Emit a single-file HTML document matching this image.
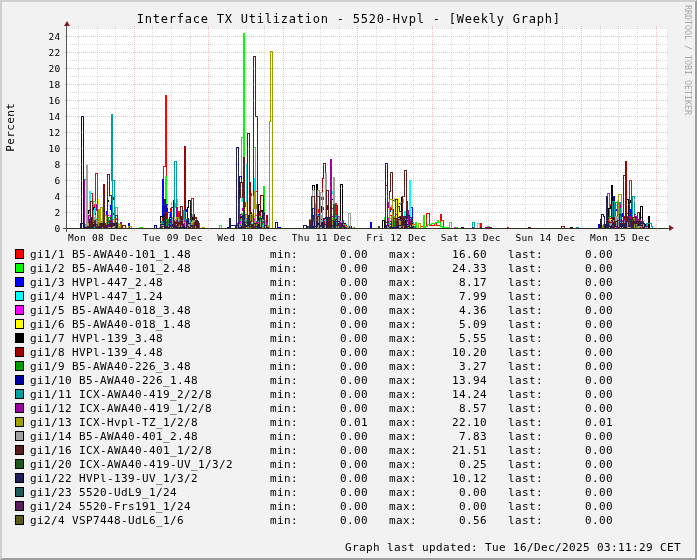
<!DOCTYPE html><html><head><meta charset="utf-8"><title>Interface TX Utilization</title>
<style>html,body{margin:0;padding:0;background:#f2f2f2}svg{display:block;will-change:transform}text{font-family:"DejaVu Sans Mono","Liberation Mono",monospace;fill:#000;white-space:pre}.l{font-size:11px;letter-spacing:0.378px}.ax{font-size:9.5px;letter-spacing:0.28px}.t{font-size:12px;letter-spacing:0.776px}</style></head><body>
<svg width="697" height="560" viewBox="0 0 697 560">
<rect width="697" height="560" fill="#f2f2f2"/>
<path d="M0 0H697V2H2V560H0Z" fill="#cfcfcf"/>
<path d="M697 560H0L2 558H695V2L697 0Z" fill="#9e9e9e"/>
<rect x="67" y="28" width="600" height="200" fill="#fff"/>
<g fill="none" stroke-width="1" stroke-linejoin="miter" stroke-linecap="square" shape-rendering="crispEdges">
<path stroke="#ff0000" d="M91.5 193.5H92.5M92.5 193.5V201.5M95.5 228.5V173.5H97.5V228.5M163.5 228.5V166.5H165.5V95.5H166.5V228.5M170.5 228.5V208.5H171.5V228.5M178.5 228.5V211.5H179.5V228.5M191.5 228.5V198.5H193.5V228.5M335.5 228.5V203.5H336.5V228.5M420.5 228.5V226.5H426.5V213.5H429.5V225.5H434.5V223.5H436.5V225.5H440.5V214.5H441.5V220.5H443.5V227.5H445.5V228.5M480.5 228.5V223.5H481.5V228.5M507.5 228.5V227.5H508.5V228.5M629.5 228.5V180.5H631.5V228.5M640.5 228.5V217.5H642.5V228.5M87.5 228.5V222.5H89.5V227.5H91.5V227.5H92.5V218.5H95.5V221.5H97.5V222.5H98.5V227.5H99.5V224.5H101.5V221.5H102.5V223.5H103.5V225.5H105.5V226.5H106.5V220.5H107.5V227.5H108.5V219.5H109.5V225.5H111.5V227.5H114.5V227.5H115.5V228.5M161.5 228.5V223.5H163.5V227.5H165.5V226.5H167.5V225.5H169.5V226.5H171.5V224.5H173.5V221.5H176.5V221.5H179.5V227.5H181.5V222.5H183.5V224.5H186.5V221.5H188.5V221.5H191.5V226.5H192.5V226.5H194.5V218.5H196.5V228.5M239.5 228.5V219.5H242.5V226.5H244.5V225.5H246.5V221.5H249.5V220.5H251.5V217.5H254.5V227.5H257.5V225.5H259.5V219.5H260.5V211.5H263.5V226.5H264.5V224.5H266.5V228.5M309.5 228.5V224.5H311.5V220.5H313.5V223.5H315.5V227.5H316.5V227.5H318.5V216.5H319.5V220.5H322.5V225.5H325.5V223.5H326.5V227.5H328.5V222.5H330.5V228.5H332.5V224.5H333.5V227.5H335.5V220.5H337.5V226.5H339.5V226.5H340.5V226.5H342.5V228.5H344.5V225.5H345.5V227.5H347.5V228.5M384.5 228.5V227.5H386.5V226.5H388.5V226.5H389.5V215.5H391.5V222.5H394.5V223.5H397.5V222.5H398.5V227.5H400.5V222.5H401.5V221.5H403.5V226.5H405.5V219.5H408.5V224.5H409.5V220.5H410.5V227.5H412.5V224.5H415.5V228.5M605.5 228.5V226.5H608.5V224.5H609.5V228.5H611.5V226.5H613.5V226.5H614.5V224.5H616.5V226.5H617.5V221.5H619.5V222.5H622.5V226.5H623.5V227.5H626.5V225.5H628.5V225.5H630.5V227.5H631.5V226.5H632.5V223.5H635.5V226.5H637.5V227.5H639.5V221.5H640.5V223.5H643.5V228.5M111.5 218.5V220.5M111.5 218.5H112.5M93.5 204.5V205.5M93.5 204.5H94.5M94.5 204.5V206.5M97.5 221.5V224.5M97.5 221.5H98.5M111.5 215.5V218.5M111.5 215.5H112.5M99.5 213.5V214.5M164.5 218.5V222.5M164.5 218.5H165.5M166.5 218.5V220.5M166.5 218.5H167.5M172.5 218.5V222.5M251.5 193.5V195.5M245.5 202.5V206.5M249.5 202.5V208.5M249.5 202.5H250.5M246.5 217.5V220.5M255.5 191.5V193.5M255.5 191.5H256.5M318.5 209.5V212.5M323.5 197.5V199.5M321.5 197.5V199.5M326.5 208.5V210.5M326.5 208.5H327.5M407.5 211.5V217.5M390.5 207.5V209.5M403.5 220.5V221.5M403.5 220.5H404.5M612.5 214.5V218.5M618.5 219.5V220.5M610.5 204.5V207.5M631.5 218.5V220.5M609.5 218.5V220.5M609.5 218.5H610.5M629.5 200.5V202.5M629.5 200.5H630.5"/>
<path stroke="#00ff00" d="M93.5 228.5V201.5H95.5V228.5M115.5 228.5V207.5H117.5V228.5M139.5 228.5V227.5H142.5V228.5M165.5 228.5V176.5H166.5V228.5M219.5 228.5V225.5H221.5V228.5M241.5 137.5V176.5M241.5 137.5H243.5M243.5 228.5V33.5H244.5V228.5M253.5 228.5V147.5H255.5V228.5M263.5 228.5V186.5H264.5V228.5M268.5 228.5V225.5H269.5V228.5M384.5 228.5V217.5H385.5V228.5M415.5 228.5V222.5H416.5V228.5M423.5 228.5V215.5H424.5V228.5M425.5 228.5V226.5H427.5V224.5H431.5V223.5H435.5V222.5H437.5V220.5H438.5V222.5H440.5V226.5H442.5V227.5H445.5V228.5M449.5 228.5V222.5H451.5V228.5M446.5 228.5V227.5H448.5V228.5M456.5 228.5V227.5H457.5V228.5M487.5 228.5V226.5H489.5V228.5M84.5 228.5V226.5H86.5V226.5H88.5V224.5H90.5V226.5H92.5V227.5H93.5V227.5H96.5V226.5H98.5V225.5H100.5V225.5H102.5V226.5H104.5V226.5H106.5V226.5H108.5V224.5H109.5V227.5H111.5V226.5H113.5V219.5H115.5V223.5H118.5V225.5H120.5V228.5M162.5 228.5V225.5H163.5V226.5H164.5V222.5H166.5V227.5H168.5V227.5H171.5V224.5H173.5V228.5H175.5V227.5H178.5V225.5H179.5V226.5H181.5V227.5H183.5V224.5H184.5V224.5H186.5V223.5H189.5V225.5H190.5V226.5H192.5V225.5H193.5V226.5H195.5V228.5M237.5 228.5V225.5H239.5V226.5H241.5V214.5H243.5V226.5H245.5V214.5H247.5V226.5H249.5V213.5H250.5V228.5H252.5V223.5H254.5V224.5H256.5V225.5H258.5V219.5H260.5V227.5H262.5V220.5H264.5V228.5M307.5 228.5V226.5H309.5V226.5H312.5V222.5H313.5V224.5H314.5V227.5H315.5V217.5H317.5V220.5H320.5V215.5H321.5V227.5H323.5V226.5H324.5V220.5H327.5V224.5H328.5V219.5H330.5V218.5H332.5V227.5H333.5V226.5H334.5V223.5H337.5V227.5H338.5V227.5H340.5V225.5H342.5V226.5H344.5V228.5M387.5 228.5V227.5H389.5V227.5H391.5V220.5H393.5V226.5H396.5V222.5H398.5V220.5H400.5V227.5H402.5V222.5H404.5V224.5H405.5V217.5H407.5V222.5H408.5V225.5H410.5V228.5M605.5 228.5V226.5H607.5V218.5H609.5V226.5H611.5V226.5H613.5V228.5H615.5V218.5H617.5V221.5H619.5V226.5H620.5V227.5H623.5V226.5H625.5V226.5H626.5V224.5H627.5V225.5H630.5V226.5H633.5V221.5H635.5V225.5H637.5V225.5H640.5V226.5H643.5V223.5H644.5V224.5H647.5V228.5M169.5 214.5V218.5M169.5 214.5H170.5M177.5 199.5V205.5M175.5 203.5V207.5M245.5 215.5V217.5M241.5 213.5V215.5M241.5 213.5H242.5M257.5 210.5V211.5M321.5 207.5V211.5M311.5 212.5V214.5M311.5 212.5H312.5M405.5 217.5V220.5M397.5 200.5V206.5M388.5 217.5V220.5M609.5 220.5V221.5"/>
<path stroke="#0000ff" d="M106.5 211.5V216.5M110.5 205.5V209.5M113.5 213.5V214.5M128.5 228.5V223.5H129.5V228.5M162.5 228.5V179.5H163.5V228.5M166.5 228.5V204.5H167.5V228.5M167.5 228.5V212.5H170.5V228.5M173.5 228.5V200.5H174.5V228.5M227.5 228.5V227.5H228.5V228.5M239.5 181.5V176.5H241.5V181.5M239.5 176.5V200.5M238.5 181.5V200.5M275.5 228.5V222.5H277.5V228.5M278.5 228.5V227.5H280.5V228.5M349.5 228.5V226.5H351.5V228.5M370.5 228.5V222.5H371.5V228.5M385.5 228.5V163.5H387.5V228.5M393.5 200.5H395.5M399.5 203.5H401.5M411.5 207.5H412.5M412.5 207.5V223.5M598.5 228.5V224.5H599.5V228.5M613.5 228.5V196.5H614.5V228.5M611.5 228.5V206.5H612.5V228.5M630.5 228.5V209.5H631.5V228.5M85.5 228.5V227.5H87.5V227.5H89.5V221.5H91.5V217.5H93.5V219.5H95.5V222.5H96.5V222.5H97.5V226.5H98.5V219.5H100.5V219.5H103.5V227.5H104.5V223.5H105.5V226.5H107.5V221.5H110.5V222.5H111.5V227.5H112.5V226.5H115.5V223.5H116.5V227.5H118.5V228.5M160.5 228.5V226.5H163.5V223.5H164.5V226.5H166.5V224.5H168.5V227.5H169.5V226.5H170.5V218.5H171.5V224.5H173.5V227.5H174.5V221.5H176.5V222.5H179.5V227.5H181.5V222.5H184.5V219.5H186.5V226.5H187.5V221.5H189.5V220.5H192.5V222.5H193.5V222.5H195.5V227.5H197.5V228.5M238.5 228.5V223.5H240.5V226.5H241.5V228.5H242.5V227.5H244.5V226.5H245.5V227.5H247.5V216.5H248.5V222.5H250.5V212.5H251.5V223.5H254.5V226.5H255.5V227.5H257.5V227.5H259.5V211.5H262.5V227.5H264.5V227.5H265.5V227.5H267.5V228.5M309.5 228.5V225.5H311.5V225.5H314.5V224.5H317.5V226.5H320.5V219.5H322.5V226.5H323.5V218.5H325.5V218.5H326.5V220.5H328.5V220.5H330.5V226.5H333.5V228.5H335.5V226.5H336.5V220.5H337.5V221.5H340.5V219.5H342.5V226.5H345.5V228.5M385.5 228.5V226.5H386.5V225.5H387.5V225.5H389.5V223.5H392.5V227.5H395.5V226.5H397.5V227.5H398.5V225.5H401.5V227.5H404.5V227.5H406.5V220.5H408.5V226.5H410.5V223.5H413.5V228.5M606.5 228.5V224.5H607.5V224.5H610.5V227.5H613.5V222.5H616.5V226.5H618.5V221.5H621.5V226.5H624.5V221.5H626.5V227.5H628.5V221.5H630.5V216.5H631.5V228.5H633.5V222.5H635.5V227.5H637.5V226.5H639.5V222.5H640.5V224.5H642.5V228.5M95.5 213.5V214.5M96.5 220.5V222.5M103.5 211.5V213.5M103.5 211.5H104.5M173.5 215.5V221.5M186.5 220.5V224.5M186.5 209.5V211.5M171.5 215.5V218.5M171.5 210.5V214.5M249.5 200.5V206.5M247.5 198.5V200.5M243.5 213.5V215.5M318.5 214.5V216.5M336.5 221.5V224.5M336.5 221.5H337.5M334.5 196.5V198.5M327.5 205.5V209.5M322.5 212.5V218.5M312.5 222.5V226.5M393.5 209.5V213.5M390.5 210.5V211.5M639.5 217.5V221.5M622.5 213.5V216.5M629.5 222.5V225.5M629.5 222.5H630.5M617.5 220.5V223.5M616.5 209.5V210.5M616.5 209.5H617.5M625.5 206.5V207.5"/>
<path stroke="#00ffff" d="M89.5 228.5V191.5H90.5V228.5M94.5 207.5V214.5M241.5 201.5V197.5H242.5V201.5M246.5 228.5V164.5H247.5V228.5M254.5 178.5V191.5M332.5 191.5V193.5M404.5 228.5V211.5H405.5V228.5M409.5 228.5V180.5H410.5V228.5M477.5 228.5V223.5H479.5V228.5M617.5 228.5V200.5H618.5V228.5M86.5 228.5V226.5H88.5V227.5H90.5V223.5H92.5V227.5H94.5V218.5H96.5V226.5H98.5V224.5H100.5V219.5H102.5V228.5H103.5V225.5H104.5V225.5H106.5V227.5H107.5V227.5H109.5V223.5H112.5V226.5H115.5V227.5H117.5V228.5M161.5 228.5V224.5H164.5V227.5H167.5V227.5H169.5V218.5H171.5V217.5H173.5V220.5H174.5V226.5H176.5V226.5H179.5V227.5H181.5V227.5H183.5V227.5H185.5V226.5H187.5V227.5H188.5V220.5H190.5V222.5H193.5V227.5H195.5V228.5M236.5 228.5V226.5H237.5V227.5H239.5V219.5H241.5V227.5H243.5V226.5H245.5V222.5H248.5V227.5H250.5V223.5H252.5V226.5H254.5V220.5H255.5V227.5H257.5V220.5H258.5V223.5H260.5V226.5H262.5V221.5H265.5V228.5M310.5 228.5V227.5H312.5V221.5H314.5V227.5H316.5V215.5H318.5V226.5H321.5V222.5H324.5V218.5H325.5V227.5H326.5V218.5H329.5V227.5H331.5V225.5H333.5V227.5H335.5V227.5H336.5V226.5H338.5V226.5H340.5V224.5H341.5V225.5H343.5V224.5H346.5V228.5M386.5 228.5V225.5H389.5V224.5H392.5V216.5H393.5V226.5H395.5V216.5H396.5V227.5H397.5V223.5H399.5V217.5H401.5V223.5H404.5V224.5H407.5V223.5H408.5V227.5H410.5V228.5M605.5 228.5V227.5H608.5V226.5H610.5V221.5H611.5V222.5H613.5V226.5H614.5V217.5H616.5V222.5H618.5V224.5H620.5V227.5H621.5V227.5H623.5V224.5H624.5V219.5H626.5V223.5H628.5V226.5H629.5V222.5H631.5V223.5H632.5V227.5H633.5V226.5H634.5V225.5H635.5V226.5H638.5V220.5H640.5V224.5H641.5V227.5H644.5V225.5H646.5V228.5M108.5 220.5V222.5M108.5 220.5H109.5M102.5 214.5V216.5M623.5 220.5V222.5M623.5 220.5H624.5M614.5 220.5V226.5M615.5 205.5V208.5M615.5 205.5H616.5M625.5 214.5V218.5"/>
<path stroke="#ff00ff" d="M454.5 228.5V227.5H455.5V228.5M607.5 228.5V193.5H609.5V228.5M85.5 228.5V225.5H88.5V223.5H91.5V226.5H92.5V220.5H94.5V223.5H95.5V226.5H96.5V221.5H98.5V226.5H99.5V227.5H102.5V227.5H104.5V227.5H105.5V227.5H107.5V215.5H110.5V221.5H111.5V223.5H113.5V219.5H115.5V219.5H117.5V228.5M160.5 228.5V226.5H163.5V223.5H165.5V226.5H166.5V227.5H168.5V221.5H171.5V223.5H172.5V225.5H174.5V227.5H175.5V227.5H178.5V220.5H180.5V224.5H183.5V224.5H185.5V227.5H188.5V221.5H190.5V227.5H193.5V227.5H195.5V228.5M237.5 228.5V223.5H239.5V224.5H240.5V221.5H243.5V226.5H246.5V226.5H249.5V217.5H251.5V226.5H252.5V227.5H254.5V215.5H257.5V215.5H259.5V227.5H261.5V226.5H262.5V227.5H265.5V228.5M309.5 228.5V226.5H310.5V226.5H312.5V226.5H313.5V224.5H315.5V226.5H317.5V222.5H319.5V227.5H321.5V227.5H323.5V227.5H326.5V224.5H328.5V226.5H331.5V221.5H334.5V226.5H337.5V216.5H339.5V223.5H341.5V220.5H343.5V226.5H344.5V228.5M386.5 228.5V227.5H388.5V218.5H391.5V223.5H392.5V214.5H393.5V226.5H395.5V218.5H397.5V226.5H399.5V221.5H402.5V224.5H403.5V227.5H405.5V226.5H408.5V219.5H410.5V228.5M606.5 228.5V226.5H608.5V227.5H610.5V228.5H611.5V226.5H612.5V226.5H614.5V225.5H615.5V227.5H617.5V225.5H618.5V228.5H620.5V227.5H622.5V225.5H624.5V226.5H626.5V227.5H628.5V227.5H630.5V222.5H632.5V225.5H634.5V216.5H636.5V228.5H637.5V227.5H639.5V227.5H641.5V226.5H644.5V225.5H645.5V228.5"/>
<path stroke="#ffff00" d="M109.5 192.5V222.5M109.5 192.5H110.5M246.5 228.5V202.5H247.5V228.5M396.5 228.5V198.5H398.5V228.5M86.5 228.5V224.5H88.5V227.5H91.5V226.5H94.5V221.5H95.5V226.5H98.5V221.5H100.5V226.5H103.5V226.5H104.5V226.5H105.5V227.5H106.5V225.5H109.5V226.5H110.5V220.5H113.5V226.5H115.5V222.5H117.5V224.5H119.5V228.5M162.5 228.5V227.5H164.5V227.5H166.5V225.5H169.5V217.5H171.5V226.5H173.5V216.5H175.5V224.5H176.5V227.5H178.5V226.5H180.5V227.5H183.5V223.5H184.5V217.5H187.5V221.5H188.5V225.5H191.5V227.5H193.5V225.5H194.5V227.5H196.5V228.5M238.5 228.5V227.5H239.5V214.5H241.5V227.5H242.5V226.5H245.5V215.5H246.5V226.5H247.5V220.5H249.5V227.5H251.5V227.5H254.5V227.5H256.5V227.5H257.5V226.5H259.5V223.5H261.5V215.5H264.5V223.5H267.5V226.5H269.5V228.5M308.5 228.5V227.5H311.5V226.5H313.5V215.5H316.5V224.5H318.5V220.5H320.5V227.5H321.5V224.5H324.5V223.5H327.5V226.5H328.5V226.5H329.5V226.5H330.5V226.5H332.5V219.5H333.5V221.5H335.5V225.5H338.5V217.5H341.5V227.5H342.5V228.5M384.5 228.5V227.5H386.5V225.5H388.5V225.5H391.5V226.5H394.5V225.5H396.5V227.5H399.5V223.5H402.5V225.5H405.5V227.5H406.5V217.5H408.5V218.5H409.5V224.5H412.5V228.5M606.5 228.5V226.5H608.5V219.5H611.5V225.5H613.5V217.5H616.5V224.5H619.5V223.5H622.5V224.5H623.5V224.5H625.5V222.5H627.5V222.5H630.5V224.5H632.5V226.5H634.5V228.5H636.5V222.5H639.5V222.5H642.5V228.5M98.5 199.5V203.5M99.5 203.5V206.5M187.5 211.5V215.5M184.5 214.5V216.5M177.5 207.5V209.5M177.5 207.5H178.5M254.5 213.5V217.5M314.5 215.5V219.5M314.5 215.5H315.5M334.5 196.5V199.5M334.5 196.5H335.5M315.5 209.5V210.5M615.5 203.5V205.5"/>
<path stroke="#000000" d="M88.5 210.5H89.5M88.5 210.5V213.5M112.5 197.5H113.5M112.5 198.5H113.5M112.5 199.5H113.5M160.5 228.5V216.5H162.5V228.5M187.5 228.5V207.5H188.5V200.5H190.5V214.5H194.5V228.5M258.5 228.5V204.5H260.5V210.5H262.5V218.5H264.5V228.5M312.5 228.5V185.5H314.5V228.5M316.5 228.5V184.5H317.5V228.5M338.5 228.5V219.5H340.5V184.5H342.5V228.5M382.5 228.5V220.5H384.5V228.5M401.5 228.5V197.5H402.5V228.5M408.5 228.5V217.5H409.5V228.5M461.5 228.5V227.5H463.5V228.5M570.5 228.5V227.5H572.5V228.5M600.5 228.5V219.5H601.5V228.5M608.5 228.5V208.5H610.5V206.5H611.5V185.5H612.5V228.5M626.5 228.5V199.5H628.5V228.5M640.5 228.5V206.5H642.5V228.5M644.5 228.5V224.5H645.5V228.5M648.5 228.5V216.5H649.5V228.5M85.5 228.5V226.5H87.5V226.5H88.5V227.5H89.5V227.5H92.5V222.5H93.5V226.5H95.5V221.5H97.5V223.5H98.5V227.5H101.5V227.5H103.5V227.5H105.5V227.5H108.5V227.5H111.5V223.5H113.5V226.5H115.5V227.5H117.5V228.5M161.5 228.5V221.5H164.5V220.5H166.5V221.5H169.5V227.5H172.5V222.5H173.5V222.5H176.5V221.5H178.5V227.5H180.5V228.5H183.5V226.5H184.5V221.5H186.5V227.5H187.5V226.5H190.5V216.5H192.5V226.5H194.5V224.5H197.5V228.5M239.5 228.5V216.5H241.5V226.5H243.5V222.5H244.5V226.5H247.5V216.5H248.5V222.5H251.5V227.5H254.5V227.5H255.5V227.5H256.5V228.5H259.5V223.5H260.5V218.5H263.5V226.5H265.5V228.5M308.5 228.5V227.5H310.5V224.5H312.5V227.5H315.5V226.5H316.5V225.5H318.5V223.5H321.5V228.5H324.5V227.5H326.5V222.5H328.5V224.5H331.5V226.5H334.5V226.5H336.5V221.5H337.5V226.5H339.5V226.5H341.5V223.5H343.5V223.5H345.5V228.5M384.5 228.5V226.5H386.5V227.5H388.5V226.5H390.5V226.5H393.5V220.5H396.5V218.5H398.5V217.5H400.5V227.5H402.5V221.5H404.5V226.5H405.5V224.5H408.5V226.5H409.5V219.5H412.5V228.5M606.5 228.5V226.5H609.5V227.5H611.5V220.5H613.5V217.5H614.5V226.5H616.5V226.5H618.5V226.5H620.5V226.5H622.5V223.5H625.5V226.5H627.5V218.5H628.5V224.5H629.5V228.5H631.5V224.5H632.5V227.5H635.5V225.5H637.5V220.5H638.5V226.5H641.5V221.5H643.5V228.5M108.5 200.5V201.5M93.5 207.5V209.5M93.5 207.5H94.5M190.5 215.5V218.5M165.5 208.5V210.5M185.5 215.5V217.5M251.5 213.5V215.5M254.5 191.5V193.5M240.5 216.5V218.5M331.5 199.5V203.5M331.5 199.5H332.5M321.5 206.5V212.5M405.5 218.5V222.5M402.5 218.5V222.5M402.5 218.5H403.5M630.5 200.5V202.5M613.5 203.5V204.5"/>
<path stroke="#a00000" d="M103.5 228.5V184.5H104.5V228.5M122.5 228.5V225.5H125.5V228.5M166.5 228.5V212.5H167.5V228.5M184.5 228.5V146.5H185.5V228.5M250.5 182.5V228.5M260.5 228.5V195.5H263.5V228.5M266.5 228.5V215.5H267.5V228.5M322.5 228.5V178.5H323.5V163.5H325.5V228.5M385.5 228.5V185.5H387.5V228.5M407.5 201.5V218.5M561.5 228.5V226.5H564.5V228.5M625.5 228.5V161.5H626.5V228.5M637.5 228.5V212.5H639.5V228.5M87.5 228.5V226.5H89.5V219.5H92.5V225.5H94.5V224.5H96.5V222.5H98.5V221.5H100.5V227.5H103.5V226.5H104.5V226.5H106.5V226.5H108.5V222.5H110.5V217.5H111.5V227.5H113.5V227.5H114.5V224.5H116.5V226.5H119.5V228.5M160.5 228.5V223.5H162.5V218.5H164.5V227.5H167.5V226.5H170.5V227.5H173.5V226.5H175.5V225.5H177.5V219.5H180.5V226.5H182.5V226.5H184.5V227.5H185.5V219.5H187.5V227.5H189.5V222.5H191.5V226.5H192.5V226.5H193.5V217.5H196.5V227.5H199.5V228.5M237.5 228.5V225.5H239.5V218.5H241.5V224.5H243.5V226.5H245.5V218.5H248.5V222.5H250.5V226.5H253.5V227.5H255.5V222.5H256.5V223.5H257.5V214.5H260.5V226.5H261.5V227.5H263.5V226.5H264.5V224.5H266.5V228.5H267.5V228.5M308.5 228.5V227.5H310.5V221.5H312.5V227.5H314.5V226.5H315.5V219.5H317.5V227.5H320.5V224.5H321.5V227.5H324.5V221.5H327.5V227.5H329.5V227.5H331.5V220.5H333.5V226.5H334.5V221.5H336.5V226.5H337.5V227.5H339.5V225.5H342.5V227.5H344.5V225.5H346.5V228.5M387.5 228.5V226.5H389.5V221.5H391.5V226.5H394.5V222.5H395.5V226.5H397.5V227.5H399.5V216.5H401.5V220.5H403.5V216.5H406.5V225.5H408.5V222.5H410.5V227.5H413.5V228.5M606.5 228.5V219.5H608.5V222.5H610.5V222.5H612.5V226.5H615.5V219.5H617.5V224.5H618.5V227.5H621.5V221.5H622.5V222.5H624.5V216.5H626.5V227.5H629.5V219.5H632.5V227.5H633.5V218.5H636.5V227.5H639.5V227.5H640.5V226.5H642.5V227.5H644.5V226.5H646.5V228.5"/>
<path stroke="#00a000" d="M615.5 228.5V202.5H617.5V228.5M84.5 228.5V227.5H85.5V224.5H87.5V223.5H90.5V223.5H92.5V224.5H94.5V223.5H96.5V222.5H99.5V227.5H102.5V226.5H104.5V226.5H107.5V224.5H108.5V217.5H111.5V226.5H113.5V226.5H116.5V228.5M161.5 228.5V223.5H164.5V226.5H166.5V219.5H168.5V224.5H169.5V226.5H171.5V225.5H174.5V226.5H175.5V228.5H177.5V227.5H179.5V225.5H182.5V227.5H185.5V225.5H187.5V226.5H189.5V222.5H190.5V228.5H192.5V222.5H193.5V224.5H194.5V227.5H196.5V223.5H199.5V228.5M238.5 228.5V221.5H240.5V219.5H242.5V226.5H243.5V226.5H244.5V220.5H246.5V223.5H249.5V228.5H251.5V226.5H254.5V226.5H257.5V226.5H260.5V217.5H262.5V224.5H263.5V226.5H264.5V225.5H266.5V228.5M310.5 228.5V224.5H312.5V224.5H315.5V226.5H316.5V227.5H317.5V226.5H318.5V227.5H320.5V227.5H323.5V227.5H325.5V217.5H327.5V222.5H328.5V218.5H329.5V227.5H331.5V223.5H334.5V226.5H337.5V227.5H340.5V221.5H341.5V222.5H342.5V227.5H344.5V228.5M385.5 228.5V226.5H387.5V227.5H390.5V226.5H393.5V227.5H394.5V221.5H397.5V226.5H399.5V226.5H401.5V222.5H404.5V225.5H406.5V227.5H408.5V227.5H410.5V226.5H412.5V226.5H415.5V228.5M603.5 228.5V224.5H604.5V224.5H605.5V227.5H607.5V217.5H609.5V216.5H612.5V222.5H613.5V226.5H615.5V226.5H616.5V226.5H619.5V221.5H620.5V221.5H621.5V222.5H622.5V222.5H624.5V222.5H626.5V222.5H629.5V224.5H630.5V226.5H633.5V223.5H635.5V226.5H636.5V227.5H637.5V226.5H640.5V222.5H642.5V228.5"/>
<path stroke="#0000a0" d="M81.5 228.5V116.5H83.5V228.5M154.5 228.5V225.5H156.5V228.5"/>
<path stroke="#00a0a0" d="M84.5 179.5H86.5M111.5 180.5V114.5H112.5V180.5M112.5 180.5V228.5M112.5 180.5H114.5M114.5 180.5V228.5M174.5 228.5V161.5H176.5V228.5M183.5 228.5V210.5H184.5V228.5M472.5 228.5V222.5H474.5V228.5M576.5 228.5V227.5H578.5V228.5M612.5 228.5V201.5H614.5V228.5M619.5 228.5V202.5H620.5V228.5M632.5 228.5V196.5H634.5V228.5M642.5 228.5V223.5H643.5V228.5M646.5 228.5V223.5H651.5V226.5H652.5V228.5M84.5 228.5V227.5H86.5V224.5H88.5V222.5H90.5V222.5H91.5V224.5H93.5V226.5H95.5V222.5H97.5V223.5H98.5V227.5H99.5V226.5H100.5V221.5H102.5V224.5H104.5V227.5H106.5V227.5H108.5V221.5H110.5V219.5H112.5V226.5H114.5V226.5H116.5V227.5H119.5V228.5M161.5 228.5V221.5H162.5V223.5H165.5V226.5H166.5V227.5H168.5V223.5H170.5V224.5H171.5V225.5H173.5V227.5H174.5V221.5H176.5V227.5H178.5V225.5H179.5V224.5H181.5V227.5H182.5V225.5H185.5V219.5H187.5V227.5H189.5V220.5H190.5V226.5H193.5V226.5H195.5V228.5M238.5 228.5V224.5H239.5V226.5H240.5V227.5H243.5V215.5H245.5V218.5H248.5V226.5H250.5V226.5H253.5V227.5H256.5V221.5H258.5V221.5H260.5V220.5H261.5V226.5H264.5V222.5H265.5V223.5H267.5V227.5H269.5V228.5M308.5 228.5V226.5H311.5V226.5H312.5V227.5H315.5V226.5H316.5V215.5H318.5V224.5H321.5V222.5H323.5V225.5H324.5V227.5H325.5V226.5H327.5V220.5H329.5V223.5H331.5V226.5H333.5V226.5H334.5V215.5H336.5V226.5H337.5V227.5H340.5V226.5H343.5V227.5H346.5V228.5M385.5 228.5V222.5H388.5V223.5H390.5V224.5H393.5V227.5H396.5V227.5H398.5V226.5H401.5V221.5H403.5V224.5H404.5V218.5H405.5V219.5H406.5V221.5H408.5V227.5H409.5V220.5H411.5V222.5H413.5V227.5H415.5V228.5M603.5 228.5V227.5H605.5V228.5H608.5V226.5H609.5V224.5H611.5V223.5H612.5V223.5H615.5V223.5H616.5V226.5H618.5V226.5H621.5V222.5H624.5V219.5H626.5V225.5H628.5V227.5H631.5V227.5H633.5V224.5H635.5V225.5H638.5V225.5H640.5V226.5H643.5V228.5"/>
<path stroke="#a000a0" d="M84.5 180.5V228.5M120.5 228.5V222.5H121.5V228.5M176.5 228.5V207.5H177.5V228.5M238.5 228.5V199.5H239.5V228.5M330.5 228.5V159.5H331.5V228.5M340.5 228.5V222.5H341.5V228.5M346.5 228.5V226.5H348.5V228.5M388.5 202.5V207.5M388.5 202.5H389.5M408.5 210.5V224.5M472.5 228.5V227.5H473.5V228.5M485.5 228.5V227.5H491.5V228.5M646.5 228.5V226.5H647.5V228.5M87.5 228.5V227.5H88.5V222.5H90.5V227.5H92.5V223.5H94.5V220.5H96.5V221.5H98.5V226.5H100.5V226.5H101.5V224.5H103.5V224.5H105.5V224.5H108.5V226.5H109.5V220.5H112.5V226.5H113.5V227.5H114.5V226.5H116.5V226.5H119.5V228.5M162.5 228.5V224.5H165.5V222.5H167.5V224.5H168.5V224.5H169.5V221.5H172.5V227.5H174.5V227.5H177.5V226.5H180.5V227.5H182.5V220.5H184.5V226.5H186.5V226.5H189.5V228.5H192.5V227.5H194.5V226.5H197.5V228.5M236.5 228.5V226.5H239.5V221.5H242.5V227.5H244.5V214.5H247.5V221.5H248.5V216.5H251.5V227.5H254.5V226.5H256.5V222.5H259.5V226.5H261.5V222.5H263.5V222.5H266.5V228.5M309.5 228.5V227.5H312.5V225.5H313.5V226.5H315.5V225.5H317.5V227.5H319.5V222.5H321.5V222.5H322.5V219.5H325.5V227.5H327.5V222.5H328.5V224.5H331.5V216.5H333.5V219.5H334.5V221.5H337.5V227.5H338.5V218.5H339.5V222.5H341.5V221.5H343.5V228.5H345.5V226.5H347.5V228.5M386.5 228.5V226.5H389.5V226.5H392.5V217.5H395.5V214.5H397.5V221.5H399.5V220.5H400.5V226.5H403.5V223.5H405.5V227.5H407.5V228.5H409.5V219.5H410.5V221.5H411.5V225.5H413.5V228.5M606.5 228.5V226.5H608.5V225.5H611.5V222.5H613.5V226.5H615.5V225.5H616.5V220.5H617.5V227.5H619.5V220.5H622.5V226.5H624.5V219.5H627.5V216.5H630.5V223.5H632.5V227.5H634.5V216.5H636.5V222.5H638.5V219.5H640.5V221.5H643.5V228.5M96.5 204.5V210.5M102.5 219.5V220.5M88.5 215.5V221.5M88.5 215.5H89.5M240.5 214.5V216.5M240.5 214.5H241.5M242.5 208.5V210.5M320.5 197.5V199.5M331.5 208.5V211.5M331.5 208.5H332.5M323.5 207.5V209.5M313.5 215.5V221.5M313.5 215.5H314.5M397.5 205.5V208.5M391.5 205.5V209.5M391.5 205.5H392.5M620.5 204.5V207.5M620.5 204.5H621.5M634.5 214.5V217.5M634.5 214.5H635.5"/>
<path stroke="#a0a000" d="M98.5 228.5V209.5H99.5V228.5M100.5 228.5V207.5H102.5V228.5M103.5 228.5V215.5H106.5V228.5M118.5 228.5V224.5H120.5V228.5M128.5 228.5V226.5H131.5V228.5M202.5 228.5V227.5H204.5V228.5M254.5 191.5V208.5M254.5 208.5V204.5H256.5V208.5M269.5 228.5V121.5H270.5V51.5H272.5V228.5M317.5 228.5V190.5H319.5V228.5M315.5 228.5V203.5H316.5V228.5M342.5 228.5V224.5H345.5V228.5M353.5 228.5V227.5H354.5V228.5M389.5 228.5V199.5H392.5V228.5M412.5 228.5V224.5H413.5V228.5M418.5 228.5V223.5H420.5V228.5M602.5 228.5V225.5H605.5V228.5M618.5 228.5V194.5H621.5V228.5M85.5 228.5V224.5H88.5V223.5H90.5V221.5H91.5V219.5H92.5V217.5H93.5V219.5H96.5V221.5H98.5V225.5H100.5V223.5H101.5V222.5H103.5V226.5H106.5V227.5H107.5V227.5H109.5V227.5H112.5V226.5H114.5V218.5H117.5V226.5H119.5V228.5M160.5 228.5V223.5H161.5V227.5H162.5V226.5H164.5V227.5H167.5V226.5H170.5V226.5H172.5V223.5H174.5V219.5H176.5V217.5H178.5V226.5H181.5V227.5H183.5V222.5H185.5V227.5H187.5V224.5H190.5V227.5H192.5V220.5H195.5V227.5H196.5V226.5H198.5V228.5H200.5V228.5M237.5 228.5V226.5H239.5V224.5H241.5V223.5H244.5V222.5H247.5V227.5H250.5V214.5H252.5V221.5H254.5V225.5H256.5V224.5H257.5V223.5H259.5V216.5H261.5V227.5H262.5V227.5H263.5V223.5H265.5V226.5H267.5V226.5H269.5V228.5M309.5 228.5V219.5H311.5V222.5H313.5V227.5H315.5V226.5H318.5V226.5H320.5V227.5H321.5V227.5H323.5V226.5H325.5V217.5H327.5V220.5H329.5V226.5H330.5V221.5H332.5V224.5H334.5V226.5H337.5V222.5H339.5V227.5H342.5V226.5H345.5V226.5H347.5V228.5M387.5 228.5V225.5H389.5V218.5H391.5V216.5H394.5V220.5H397.5V226.5H399.5V221.5H400.5V226.5H403.5V228.5H405.5V226.5H408.5V227.5H411.5V228.5M605.5 228.5V225.5H606.5V227.5H608.5V226.5H610.5V227.5H612.5V220.5H615.5V223.5H616.5V216.5H617.5V222.5H620.5V227.5H622.5V222.5H625.5V220.5H627.5V227.5H630.5V227.5H632.5V218.5H634.5V227.5H636.5V227.5H639.5V228.5H641.5V226.5H642.5V227.5H644.5V228.5"/>
<path stroke="#a0a0a0" d="M86.5 228.5V165.5H87.5V228.5M312.5 228.5V190.5H314.5V228.5M320.5 228.5V192.5H322.5V228.5M325.5 228.5V173.5H326.5V228.5M333.5 228.5V177.5H334.5V228.5M348.5 228.5V213.5H350.5V228.5M615.5 228.5V216.5H617.5V228.5M620.5 228.5V222.5H622.5V228.5M84.5 228.5V227.5H86.5V225.5H88.5V226.5H89.5V219.5H91.5V223.5H93.5V225.5H95.5V220.5H96.5V226.5H97.5V226.5H99.5V227.5H100.5V223.5H102.5V227.5H104.5V226.5H106.5V227.5H109.5V226.5H111.5V227.5H113.5V223.5H114.5V227.5H117.5V228.5M159.5 228.5V227.5H161.5V224.5H162.5V225.5H164.5V226.5H166.5V227.5H168.5V226.5H169.5V226.5H170.5V227.5H172.5V217.5H174.5V224.5H176.5V224.5H178.5V219.5H180.5V218.5H181.5V220.5H183.5V222.5H185.5V226.5H186.5V226.5H188.5V219.5H189.5V226.5H191.5V222.5H193.5V220.5H194.5V227.5H195.5V227.5H196.5V228.5M239.5 228.5V226.5H241.5V218.5H243.5V223.5H245.5V219.5H247.5V221.5H249.5V222.5H251.5V225.5H253.5V216.5H254.5V216.5H255.5V228.5H257.5V221.5H260.5V227.5H261.5V219.5H262.5V220.5H265.5V227.5H267.5V228.5M310.5 228.5V225.5H312.5V226.5H314.5V226.5H315.5V216.5H318.5V227.5H319.5V224.5H321.5V227.5H322.5V228.5H325.5V223.5H327.5V227.5H330.5V228.5H331.5V227.5H333.5V217.5H335.5V227.5H338.5V217.5H339.5V221.5H341.5V228.5H343.5V228.5M385.5 228.5V227.5H388.5V227.5H391.5V227.5H392.5V227.5H395.5V226.5H398.5V218.5H399.5V227.5H400.5V226.5H402.5V226.5H404.5V227.5H405.5V225.5H407.5V226.5H410.5V225.5H411.5V228.5M606.5 228.5V224.5H608.5V227.5H610.5V221.5H611.5V224.5H612.5V221.5H615.5V226.5H616.5V217.5H618.5V226.5H620.5V226.5H621.5V226.5H624.5V221.5H627.5V227.5H630.5V222.5H633.5V226.5H635.5V223.5H636.5V225.5H638.5V226.5H640.5V224.5H643.5V227.5H645.5V227.5H647.5V228.5M94.5 217.5V223.5M94.5 217.5H95.5M167.5 205.5V207.5M164.5 210.5V212.5M192.5 214.5V216.5M192.5 214.5H193.5M164.5 211.5V213.5M171.5 202.5V204.5M403.5 199.5V202.5M394.5 198.5V201.5M391.5 205.5V207.5M400.5 202.5V204.5M400.5 202.5H401.5M634.5 199.5V201.5"/>
<path stroke="#5a1e1e" d="M90.5 228.5V201.5H92.5V228.5M103.5 228.5V195.5H104.5V228.5M107.5 174.5V228.5M107.5 174.5H109.5M109.5 174.5V195.5M109.5 195.5H111.5M111.5 195.5V228.5M115.5 228.5V215.5H117.5V228.5M171.5 228.5V207.5H173.5V228.5M180.5 228.5V206.5H182.5V228.5M196.5 228.5V221.5H198.5V228.5M240.5 197.5V182.5H242.5V197.5M243.5 228.5V157.5H244.5V228.5M247.5 228.5V133.5H249.5V228.5M253.5 228.5V56.5H255.5V116.5H257.5V228.5M309.5 228.5V220.5H310.5V228.5M311.5 228.5V196.5H314.5V228.5M316.5 228.5V196.5H319.5V228.5M326.5 228.5V190.5H328.5V228.5M330.5 228.5V201.5H331.5V228.5M334.5 228.5V205.5H337.5V228.5M389.5 228.5V191.5H390.5V172.5H392.5V228.5M395.5 206.5V199.5H397.5V206.5M395.5 199.5V228.5M397.5 228.5V206.5H399.5V211.5H401.5V216.5H404.5V228.5M402.5 228.5V196.5H404.5V170.5H406.5V228.5M480.5 228.5V227.5H481.5V228.5M528.5 228.5V227.5H530.5V228.5M623.5 228.5V175.5H625.5V228.5M629.5 202.5V221.5M612.5 228.5V217.5H614.5V228.5M619.5 228.5V214.5H621.5V228.5M626.5 228.5V213.5H631.5V228.5M632.5 228.5V217.5H635.5V228.5M84.5 228.5V227.5H87.5V226.5H90.5V217.5H92.5V226.5H94.5V220.5H95.5V227.5H96.5V226.5H99.5V223.5H100.5V226.5H102.5V223.5H105.5V227.5H106.5V228.5H107.5V221.5H110.5V226.5H112.5V224.5H115.5V222.5H117.5V228.5M161.5 228.5V226.5H164.5V227.5H167.5V227.5H169.5V226.5H171.5V226.5H173.5V220.5H174.5V227.5H175.5V223.5H176.5V221.5H177.5V225.5H178.5V222.5H180.5V216.5H181.5V224.5H183.5V227.5H186.5V222.5H187.5V226.5H188.5V227.5H190.5V226.5H192.5V227.5H194.5V222.5H196.5V225.5H198.5V228.5M238.5 228.5V227.5H240.5V227.5H243.5V225.5H244.5V222.5H247.5V221.5H250.5V224.5H252.5V227.5H255.5V226.5H258.5V227.5H261.5V218.5H264.5V225.5H266.5V227.5H268.5V228.5M307.5 228.5V226.5H309.5V224.5H311.5V227.5H313.5V226.5H315.5V226.5H317.5V216.5H319.5V225.5H321.5V226.5H324.5V224.5H327.5V221.5H329.5V227.5H331.5V225.5H333.5V221.5H334.5V227.5H335.5V219.5H337.5V223.5H338.5V225.5H341.5V226.5H343.5V227.5H346.5V228.5M385.5 228.5V222.5H388.5V221.5H389.5V227.5H390.5V226.5H393.5V218.5H396.5V226.5H398.5V219.5H401.5V225.5H404.5V217.5H406.5V226.5H409.5V217.5H411.5V226.5H413.5V228.5M605.5 228.5V227.5H607.5V227.5H608.5V222.5H611.5V222.5H613.5V224.5H615.5V221.5H617.5V227.5H619.5V223.5H622.5V223.5H624.5V227.5H626.5V217.5H628.5V226.5H629.5V226.5H631.5V223.5H634.5V221.5H636.5V223.5H638.5V220.5H640.5V223.5H642.5V227.5H644.5V228.5"/>
<path stroke="#1e5a1e" d="M333.5 228.5V204.5H334.5V228.5M378.5 228.5V226.5H379.5V228.5"/>
<path stroke="#1e1e5a" d="M80.5 228.5V223.5H84.5V228.5M164.5 228.5V199.5H165.5V228.5M229.5 228.5V218.5H230.5V228.5M230.5 228.5V225.5H235.5V228.5M236.5 228.5V147.5H238.5V228.5M303.5 228.5V225.5H306.5V228.5M312.5 228.5V208.5H314.5V228.5M601.5 228.5V214.5H603.5V216.5H604.5V228.5M606.5 228.5V196.5H607.5V228.5M85.5 228.5V227.5H87.5V227.5H89.5V219.5H91.5V227.5H93.5V224.5H95.5V224.5H97.5V227.5H98.5V227.5H101.5V223.5H103.5V226.5H106.5V225.5H107.5V224.5H109.5V226.5H111.5V223.5H113.5V225.5H114.5V223.5H116.5V228.5M160.5 228.5V224.5H162.5V224.5H165.5V226.5H167.5V227.5H169.5V217.5H171.5V224.5H172.5V226.5H173.5V226.5H175.5V226.5H176.5V227.5H178.5V227.5H180.5V227.5H183.5V226.5H184.5V227.5H186.5V223.5H187.5V218.5H188.5V223.5H189.5V223.5H190.5V225.5H192.5V225.5H195.5V220.5H197.5V228.5M239.5 228.5V227.5H241.5V226.5H242.5V215.5H243.5V211.5H244.5V225.5H246.5V225.5H248.5V215.5H249.5V226.5H251.5V225.5H253.5V223.5H255.5V226.5H257.5V227.5H259.5V218.5H262.5V212.5H264.5V228.5M310.5 228.5V226.5H312.5V215.5H314.5V226.5H316.5V222.5H317.5V224.5H318.5V223.5H319.5V226.5H321.5V222.5H322.5V227.5H323.5V218.5H325.5V217.5H326.5V227.5H327.5V217.5H329.5V227.5H331.5V220.5H333.5V227.5H334.5V221.5H335.5V225.5H337.5V221.5H339.5V227.5H341.5V223.5H342.5V226.5H344.5V228.5M384.5 228.5V228.5H386.5V225.5H388.5V226.5H389.5V224.5H391.5V227.5H394.5V227.5H396.5V227.5H398.5V225.5H401.5V220.5H403.5V224.5H405.5V227.5H406.5V215.5H409.5V227.5H410.5V227.5H412.5V228.5M605.5 228.5V224.5H608.5V226.5H610.5V227.5H612.5V224.5H615.5V226.5H617.5V220.5H619.5V223.5H620.5V226.5H622.5V224.5H624.5V226.5H626.5V221.5H627.5V219.5H630.5V226.5H633.5V222.5H636.5V221.5H637.5V225.5H640.5V222.5H642.5V223.5H644.5V228.5"/>
<path stroke="#a0a000" d="M253.5 196.5V208.5M389.5 199.5H392.5M392.5 199.5V226.5M389.5 199.5V226.5"/>
<path stroke="#5a5a1e" d="M67 228.5H667"/>
</g>
<g shape-rendering="crispEdges"><path d="M66 220.5H668" stroke="#8f8f8f" stroke-opacity=".3" stroke-width="1" stroke-dasharray="1 1"/><path d="M66 204.5H668" stroke="#8f8f8f" stroke-opacity=".3" stroke-width="1" stroke-dasharray="1 1"/><path d="M66 188.5H668" stroke="#8f8f8f" stroke-opacity=".3" stroke-width="1" stroke-dasharray="1 1"/><path d="M66 172.5H668" stroke="#8f8f8f" stroke-opacity=".3" stroke-width="1" stroke-dasharray="1 1"/><path d="M66 156.5H668" stroke="#8f8f8f" stroke-opacity=".3" stroke-width="1" stroke-dasharray="1 1"/><path d="M66 140.5H668" stroke="#8f8f8f" stroke-opacity=".3" stroke-width="1" stroke-dasharray="1 1"/><path d="M66 124.5H668" stroke="#8f8f8f" stroke-opacity=".3" stroke-width="1" stroke-dasharray="1 1"/><path d="M66 108.5H668" stroke="#8f8f8f" stroke-opacity=".3" stroke-width="1" stroke-dasharray="1 1"/><path d="M66 92.5H668" stroke="#8f8f8f" stroke-opacity=".3" stroke-width="1" stroke-dasharray="1 1"/><path d="M66 76.5H668" stroke="#8f8f8f" stroke-opacity=".3" stroke-width="1" stroke-dasharray="1 1"/><path d="M66 60.5H668" stroke="#8f8f8f" stroke-opacity=".3" stroke-width="1" stroke-dasharray="1 1"/><path d="M66 44.5H668" stroke="#8f8f8f" stroke-opacity=".3" stroke-width="1" stroke-dasharray="1 1"/><path d="M66 28.5H668" stroke="#8f8f8f" stroke-opacity=".3" stroke-width="1" stroke-dasharray="1 1"/><path d="M65 228.5H669" stroke="#de4f4f" stroke-opacity=".38" stroke-width="1" stroke-dasharray="1 1"/><path d="M65 212.5H669" stroke="#de4f4f" stroke-opacity=".38" stroke-width="1" stroke-dasharray="1 1"/><path d="M65 196.5H669" stroke="#de4f4f" stroke-opacity=".38" stroke-width="1" stroke-dasharray="1 1"/><path d="M65 180.5H669" stroke="#de4f4f" stroke-opacity=".38" stroke-width="1" stroke-dasharray="1 1"/><path d="M65 164.5H669" stroke="#de4f4f" stroke-opacity=".38" stroke-width="1" stroke-dasharray="1 1"/><path d="M65 148.5H669" stroke="#de4f4f" stroke-opacity=".38" stroke-width="1" stroke-dasharray="1 1"/><path d="M65 132.5H669" stroke="#de4f4f" stroke-opacity=".38" stroke-width="1" stroke-dasharray="1 1"/><path d="M65 116.5H669" stroke="#de4f4f" stroke-opacity=".38" stroke-width="1" stroke-dasharray="1 1"/><path d="M65 100.5H669" stroke="#de4f4f" stroke-opacity=".38" stroke-width="1" stroke-dasharray="1 1"/><path d="M65 84.5H669" stroke="#de4f4f" stroke-opacity=".38" stroke-width="1" stroke-dasharray="1 1"/><path d="M65 68.5H669" stroke="#de4f4f" stroke-opacity=".38" stroke-width="1" stroke-dasharray="1 1"/><path d="M65 52.5H669" stroke="#de4f4f" stroke-opacity=".38" stroke-width="1" stroke-dasharray="1 1"/><path d="M65 36.5H669" stroke="#de4f4f" stroke-opacity=".38" stroke-width="1" stroke-dasharray="1 1"/><path d="M78.5 26V229" stroke="#8f8f8f" stroke-opacity=".3" stroke-width="1" stroke-dasharray="1 1"/><path d="M97.5 26V229" stroke="#8f8f8f" stroke-opacity=".3" stroke-width="1" stroke-dasharray="1 1"/><path d="M115.5 26V229" stroke="#8f8f8f" stroke-opacity=".3" stroke-width="1" stroke-dasharray="1 1"/><path d="M134.5 26V231" stroke="#de4f4f" stroke-opacity=".38" stroke-width="1" stroke-dasharray="1 1"/><path d="M152.5 26V229" stroke="#8f8f8f" stroke-opacity=".3" stroke-width="1" stroke-dasharray="1 1"/><path d="M171.5 26V229" stroke="#8f8f8f" stroke-opacity=".3" stroke-width="1" stroke-dasharray="1 1"/><path d="M190.5 26V229" stroke="#8f8f8f" stroke-opacity=".3" stroke-width="1" stroke-dasharray="1 1"/><path d="M208.5 26V231" stroke="#de4f4f" stroke-opacity=".38" stroke-width="1" stroke-dasharray="1 1"/><path d="M227.5 26V229" stroke="#8f8f8f" stroke-opacity=".3" stroke-width="1" stroke-dasharray="1 1"/><path d="M246.5 26V229" stroke="#8f8f8f" stroke-opacity=".3" stroke-width="1" stroke-dasharray="1 1"/><path d="M264.5 26V229" stroke="#8f8f8f" stroke-opacity=".3" stroke-width="1" stroke-dasharray="1 1"/><path d="M283.5 26V231" stroke="#de4f4f" stroke-opacity=".38" stroke-width="1" stroke-dasharray="1 1"/><path d="M302.5 26V229" stroke="#8f8f8f" stroke-opacity=".3" stroke-width="1" stroke-dasharray="1 1"/><path d="M320.5 26V229" stroke="#8f8f8f" stroke-opacity=".3" stroke-width="1" stroke-dasharray="1 1"/><path d="M339.5 26V229" stroke="#8f8f8f" stroke-opacity=".3" stroke-width="1" stroke-dasharray="1 1"/><path d="M357.5 26V231" stroke="#de4f4f" stroke-opacity=".38" stroke-width="1" stroke-dasharray="1 1"/><path d="M376.5 26V229" stroke="#8f8f8f" stroke-opacity=".3" stroke-width="1" stroke-dasharray="1 1"/><path d="M395.5 26V229" stroke="#8f8f8f" stroke-opacity=".3" stroke-width="1" stroke-dasharray="1 1"/><path d="M413.5 26V229" stroke="#8f8f8f" stroke-opacity=".3" stroke-width="1" stroke-dasharray="1 1"/><path d="M432.5 26V231" stroke="#de4f4f" stroke-opacity=".38" stroke-width="1" stroke-dasharray="1 1"/><path d="M451.5 26V229" stroke="#8f8f8f" stroke-opacity=".3" stroke-width="1" stroke-dasharray="1 1"/><path d="M469.5 26V229" stroke="#8f8f8f" stroke-opacity=".3" stroke-width="1" stroke-dasharray="1 1"/><path d="M488.5 26V229" stroke="#8f8f8f" stroke-opacity=".3" stroke-width="1" stroke-dasharray="1 1"/><path d="M507.5 26V231" stroke="#de4f4f" stroke-opacity=".38" stroke-width="1" stroke-dasharray="1 1"/><path d="M525.5 26V229" stroke="#8f8f8f" stroke-opacity=".3" stroke-width="1" stroke-dasharray="1 1"/><path d="M544.5 26V229" stroke="#8f8f8f" stroke-opacity=".3" stroke-width="1" stroke-dasharray="1 1"/><path d="M562.5 26V229" stroke="#8f8f8f" stroke-opacity=".3" stroke-width="1" stroke-dasharray="1 1"/><path d="M581.5 26V231" stroke="#de4f4f" stroke-opacity=".38" stroke-width="1" stroke-dasharray="1 1"/><path d="M600.5 26V229" stroke="#8f8f8f" stroke-opacity=".3" stroke-width="1" stroke-dasharray="1 1"/><path d="M618.5 26V229" stroke="#8f8f8f" stroke-opacity=".3" stroke-width="1" stroke-dasharray="1 1"/><path d="M637.5 26V229" stroke="#8f8f8f" stroke-opacity=".3" stroke-width="1" stroke-dasharray="1 1"/><path d="M656.5 26V231" stroke="#de4f4f" stroke-opacity=".38" stroke-width="1" stroke-dasharray="1 1"/></g>
<path d="M63 228.5H671M66.5 232V24" stroke="#1f1f1f" stroke-opacity=".75" stroke-width="1" fill="none" shape-rendering="crispEdges"/>
<path d="M669 225V231L674 228Z" fill="#801f1f"/>
<path d="M64 26H70L67 21Z" fill="#801f1f"/>
<text class="t" x="348.8" y="22.9" text-anchor="middle">Interface TX Utilization - 5520-Hvpl - [Weekly Graph]</text>
<text class="ax" x="60.5" y="232" text-anchor="end">0</text>
<text class="ax" x="60.5" y="216" text-anchor="end">2</text>
<text class="ax" x="60.5" y="200" text-anchor="end">4</text>
<text class="ax" x="60.5" y="184" text-anchor="end">6</text>
<text class="ax" x="60.5" y="168" text-anchor="end">8</text>
<text class="ax" x="60.5" y="152" text-anchor="end">10</text>
<text class="ax" x="60.5" y="136" text-anchor="end">12</text>
<text class="ax" x="60.5" y="120" text-anchor="end">14</text>
<text class="ax" x="60.5" y="104" text-anchor="end">16</text>
<text class="ax" x="60.5" y="88" text-anchor="end">18</text>
<text class="ax" x="60.5" y="72" text-anchor="end">20</text>
<text class="ax" x="60.5" y="56" text-anchor="end">22</text>
<text class="ax" x="60.5" y="40" text-anchor="end">24</text>
<text class="ax" x="98.0" y="240.8" text-anchor="middle">Mon 08 Dec</text>
<text class="ax" x="172.7" y="240.8" text-anchor="middle">Tue 09 Dec</text>
<text class="ax" x="247.2" y="240.8" text-anchor="middle">Wed 10 Dec</text>
<text class="ax" x="321.8" y="240.8" text-anchor="middle">Thu 11 Dec</text>
<text class="ax" x="396.3" y="240.8" text-anchor="middle">Fri 12 Dec</text>
<text class="ax" x="470.8" y="240.8" text-anchor="middle">Sat 13 Dec</text>
<text class="ax" x="545.4" y="240.8" text-anchor="middle">Sun 14 Dec</text>
<text class="ax" x="619.9" y="240.8" text-anchor="middle">Mon 15 Dec</text>
<text class="l" transform="translate(14.2,127.3) rotate(-90)" text-anchor="middle">Percent</text>
<text transform="translate(685,5) rotate(90)" font-size="8.3px" style="fill:#a8a8a8">RRDTOOL / TOBI OETIKER</text>
<rect x="15.5" y="249.5" width="8" height="9" fill="#ff0000" stroke="#000" stroke-width="1"/>
<text class="l" x="30" y="258">gi1/1 B5-AWA40-101_1.48</text>
<text class="l" x="270" y="258">min:</text><text class="l" x="368" y="258" text-anchor="end">0.00</text>
<text class="l" x="389" y="258">max:</text><text class="l" x="487" y="258" text-anchor="end">16.60</text>
<text class="l" x="508" y="258">last:</text><text class="l" x="613" y="258" text-anchor="end">0.00</text>
<rect x="15.5" y="263.5" width="8" height="9" fill="#00ff00" stroke="#000" stroke-width="1"/>
<text class="l" x="30" y="272">gi1/2 B5-AWA40-101_2.48</text>
<text class="l" x="270" y="272">min:</text><text class="l" x="368" y="272" text-anchor="end">0.00</text>
<text class="l" x="389" y="272">max:</text><text class="l" x="487" y="272" text-anchor="end">24.33</text>
<text class="l" x="508" y="272">last:</text><text class="l" x="613" y="272" text-anchor="end">0.00</text>
<rect x="15.5" y="277.5" width="8" height="9" fill="#0000ff" stroke="#000" stroke-width="1"/>
<text class="l" x="30" y="286">gi1/3 HVPl-447_2.48</text>
<text class="l" x="270" y="286">min:</text><text class="l" x="368" y="286" text-anchor="end">0.00</text>
<text class="l" x="389" y="286">max:</text><text class="l" x="487" y="286" text-anchor="end">8.17</text>
<text class="l" x="508" y="286">last:</text><text class="l" x="613" y="286" text-anchor="end">0.00</text>
<rect x="15.5" y="291.5" width="8" height="9" fill="#00ffff" stroke="#000" stroke-width="1"/>
<text class="l" x="30" y="300">gi1/4 HVPl-447_1.24</text>
<text class="l" x="270" y="300">min:</text><text class="l" x="368" y="300" text-anchor="end">0.00</text>
<text class="l" x="389" y="300">max:</text><text class="l" x="487" y="300" text-anchor="end">7.99</text>
<text class="l" x="508" y="300">last:</text><text class="l" x="613" y="300" text-anchor="end">0.00</text>
<rect x="15.5" y="305.5" width="8" height="9" fill="#ff00ff" stroke="#000" stroke-width="1"/>
<text class="l" x="30" y="314">gi1/5 B5-AWA40-018_3.48</text>
<text class="l" x="270" y="314">min:</text><text class="l" x="368" y="314" text-anchor="end">0.00</text>
<text class="l" x="389" y="314">max:</text><text class="l" x="487" y="314" text-anchor="end">4.36</text>
<text class="l" x="508" y="314">last:</text><text class="l" x="613" y="314" text-anchor="end">0.00</text>
<rect x="15.5" y="319.5" width="8" height="9" fill="#ffff00" stroke="#000" stroke-width="1"/>
<text class="l" x="30" y="328">gi1/6 B5-AWA40-018_1.48</text>
<text class="l" x="270" y="328">min:</text><text class="l" x="368" y="328" text-anchor="end">0.00</text>
<text class="l" x="389" y="328">max:</text><text class="l" x="487" y="328" text-anchor="end">5.09</text>
<text class="l" x="508" y="328">last:</text><text class="l" x="613" y="328" text-anchor="end">0.00</text>
<rect x="15.5" y="333.5" width="8" height="9" fill="#000000" stroke="#000" stroke-width="1"/>
<text class="l" x="30" y="342">gi1/7 HVPl-139_3.48</text>
<text class="l" x="270" y="342">min:</text><text class="l" x="368" y="342" text-anchor="end">0.00</text>
<text class="l" x="389" y="342">max:</text><text class="l" x="487" y="342" text-anchor="end">5.55</text>
<text class="l" x="508" y="342">last:</text><text class="l" x="613" y="342" text-anchor="end">0.00</text>
<rect x="15.5" y="347.5" width="8" height="9" fill="#a00000" stroke="#000" stroke-width="1"/>
<text class="l" x="30" y="356">gi1/8 HVPl-139_4.48</text>
<text class="l" x="270" y="356">min:</text><text class="l" x="368" y="356" text-anchor="end">0.00</text>
<text class="l" x="389" y="356">max:</text><text class="l" x="487" y="356" text-anchor="end">10.20</text>
<text class="l" x="508" y="356">last:</text><text class="l" x="613" y="356" text-anchor="end">0.00</text>
<rect x="15.5" y="361.5" width="8" height="9" fill="#00a000" stroke="#000" stroke-width="1"/>
<text class="l" x="30" y="370">gi1/9 B5-AWA40-226_3.48</text>
<text class="l" x="270" y="370">min:</text><text class="l" x="368" y="370" text-anchor="end">0.00</text>
<text class="l" x="389" y="370">max:</text><text class="l" x="487" y="370" text-anchor="end">3.27</text>
<text class="l" x="508" y="370">last:</text><text class="l" x="613" y="370" text-anchor="end">0.00</text>
<rect x="15.5" y="375.5" width="8" height="9" fill="#0000a0" stroke="#000" stroke-width="1"/>
<text class="l" x="30" y="384">gi1/10 B5-AWA40-226_1.48</text>
<text class="l" x="270" y="384">min:</text><text class="l" x="368" y="384" text-anchor="end">0.00</text>
<text class="l" x="389" y="384">max:</text><text class="l" x="487" y="384" text-anchor="end">13.94</text>
<text class="l" x="508" y="384">last:</text><text class="l" x="613" y="384" text-anchor="end">0.00</text>
<rect x="15.5" y="389.5" width="8" height="9" fill="#00a0a0" stroke="#000" stroke-width="1"/>
<text class="l" x="30" y="398">gi1/11 ICX-AWA40-419_2/2/8</text>
<text class="l" x="270" y="398">min:</text><text class="l" x="368" y="398" text-anchor="end">0.00</text>
<text class="l" x="389" y="398">max:</text><text class="l" x="487" y="398" text-anchor="end">14.24</text>
<text class="l" x="508" y="398">last:</text><text class="l" x="613" y="398" text-anchor="end">0.00</text>
<rect x="15.5" y="403.5" width="8" height="9" fill="#a000a0" stroke="#000" stroke-width="1"/>
<text class="l" x="30" y="412">gi1/12 ICX-AWA40-419_1/2/8</text>
<text class="l" x="270" y="412">min:</text><text class="l" x="368" y="412" text-anchor="end">0.00</text>
<text class="l" x="389" y="412">max:</text><text class="l" x="487" y="412" text-anchor="end">8.57</text>
<text class="l" x="508" y="412">last:</text><text class="l" x="613" y="412" text-anchor="end">0.00</text>
<rect x="15.5" y="417.5" width="8" height="9" fill="#a0a000" stroke="#000" stroke-width="1"/>
<text class="l" x="30" y="426">gi1/13 ICX-Hvpl-TZ_1/2/8</text>
<text class="l" x="270" y="426">min:</text><text class="l" x="368" y="426" text-anchor="end">0.01</text>
<text class="l" x="389" y="426">max:</text><text class="l" x="487" y="426" text-anchor="end">22.10</text>
<text class="l" x="508" y="426">last:</text><text class="l" x="613" y="426" text-anchor="end">0.01</text>
<rect x="15.5" y="431.5" width="8" height="9" fill="#a0a0a0" stroke="#000" stroke-width="1"/>
<text class="l" x="30" y="440">gi1/14 B5-AWA40-401_2.48</text>
<text class="l" x="270" y="440">min:</text><text class="l" x="368" y="440" text-anchor="end">0.00</text>
<text class="l" x="389" y="440">max:</text><text class="l" x="487" y="440" text-anchor="end">7.83</text>
<text class="l" x="508" y="440">last:</text><text class="l" x="613" y="440" text-anchor="end">0.00</text>
<rect x="15.5" y="445.5" width="8" height="9" fill="#5a1e1e" stroke="#000" stroke-width="1"/>
<text class="l" x="30" y="454">gi1/16 ICX-AWA40-401_1/2/8</text>
<text class="l" x="270" y="454">min:</text><text class="l" x="368" y="454" text-anchor="end">0.00</text>
<text class="l" x="389" y="454">max:</text><text class="l" x="487" y="454" text-anchor="end">21.51</text>
<text class="l" x="508" y="454">last:</text><text class="l" x="613" y="454" text-anchor="end">0.00</text>
<rect x="15.5" y="459.5" width="8" height="9" fill="#1e5a1e" stroke="#000" stroke-width="1"/>
<text class="l" x="30" y="468">gi1/20 ICX-AWA40-419-UV_1/3/2</text>
<text class="l" x="270" y="468">min:</text><text class="l" x="368" y="468" text-anchor="end">0.00</text>
<text class="l" x="389" y="468">max:</text><text class="l" x="487" y="468" text-anchor="end">0.25</text>
<text class="l" x="508" y="468">last:</text><text class="l" x="613" y="468" text-anchor="end">0.00</text>
<rect x="15.5" y="473.5" width="8" height="9" fill="#1e1e5a" stroke="#000" stroke-width="1"/>
<text class="l" x="30" y="482">gi1/22 HVPl-139-UV_1/3/2</text>
<text class="l" x="270" y="482">min:</text><text class="l" x="368" y="482" text-anchor="end">0.00</text>
<text class="l" x="389" y="482">max:</text><text class="l" x="487" y="482" text-anchor="end">10.12</text>
<text class="l" x="508" y="482">last:</text><text class="l" x="613" y="482" text-anchor="end">0.00</text>
<rect x="15.5" y="487.5" width="8" height="9" fill="#1e5a5a" stroke="#000" stroke-width="1"/>
<text class="l" x="30" y="496">gi1/23 5520-UdL9_1/24</text>
<text class="l" x="270" y="496">min:</text><text class="l" x="368" y="496" text-anchor="end">0.00</text>
<text class="l" x="389" y="496">max:</text><text class="l" x="487" y="496" text-anchor="end">0.00</text>
<text class="l" x="508" y="496">last:</text><text class="l" x="613" y="496" text-anchor="end">0.00</text>
<rect x="15.5" y="501.5" width="8" height="9" fill="#5a1e5a" stroke="#000" stroke-width="1"/>
<text class="l" x="30" y="510">gi1/24 5520-Frs191_1/24</text>
<text class="l" x="270" y="510">min:</text><text class="l" x="368" y="510" text-anchor="end">0.00</text>
<text class="l" x="389" y="510">max:</text><text class="l" x="487" y="510" text-anchor="end">0.00</text>
<text class="l" x="508" y="510">last:</text><text class="l" x="613" y="510" text-anchor="end">0.00</text>
<rect x="15.5" y="515.5" width="8" height="9" fill="#5a5a1e" stroke="#000" stroke-width="1"/>
<text class="l" x="30" y="524">gi2/4 VSP7448-UdL6_1/6</text>
<text class="l" x="270" y="524">min:</text><text class="l" x="368" y="524" text-anchor="end">0.00</text>
<text class="l" x="389" y="524">max:</text><text class="l" x="487" y="524" text-anchor="end">0.56</text>
<text class="l" x="508" y="524">last:</text><text class="l" x="613" y="524" text-anchor="end">0.00</text>
<text class="l" x="681" y="550.5" text-anchor="end">Graph last updated: Tue 16/Dec/2025 03:11:29 CET</text>
</svg></body></html>
